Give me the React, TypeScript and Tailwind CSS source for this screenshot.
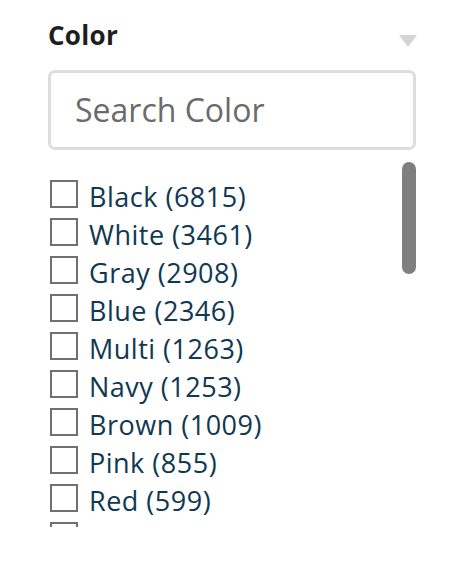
const colors = [
  ["Black", 6815],
  ["White", 3461],
  ["Gray", 2908],
  ["Blue", 2346],
  ["Multi", 1263],
  ["Navy", 1253],
  ["Brown", 1009],
  ["Pink", 855],
  ["Red", 599],
  ["Green", 512],
  ["Beige", 410],
]

const App = () => {
  return (
    <div className="w-[466px] h-[568px] bg-white font-['Open_Sans',sans-serif]">
      <div className="pl-[48px] w-[417px] pt-[18px]">
        <div className="flex items-center justify-between h-[34px]">
          <h3 className="text-[26px] font-bold text-[#1e1e1e] leading-none tracking-[0.3px]">Color</h3>
          <svg width="18" height="12" viewBox="0 0 18 12" className="mt-[12px]">
            <polygon points="0,0 18,0 9,12" fill="#d4d4d4" />
          </svg>
        </div>
        <div className="mt-[18px] mr-[1px] h-[80px] border-[3px] border-[#dddddd] rounded-[7px] flex items-center pl-[24px]">
          <input
            className="w-full outline-none text-[32px] text-[#333] placeholder:text-[#6b6b6b] bg-transparent"
            placeholder="Search Color"
          />
        </div>
        <div className="relative mt-[10px] h-[367px] overflow-hidden">
          <ul className="pt-[15px] pl-[2px]">
            {colors.map(([name, count]) => (
              <li key={name} className="flex items-center h-[38px] gap-[11px]">
                <span className="w-[28px] h-[28px] border-[2px] border-[#707070] bg-white shrink-0" />
                <span className="pt-[4px] text-[27px] tracking-[0.5px] text-[#0f3852] leading-none">
                  {name} ({count})
                </span>
              </li>
            ))}
          </ul>
          <div className="absolute right-[1px] top-[2px] w-[14px] h-[112px] rounded-full bg-[#7f7f7f]" />
        </div>
      </div>
    </div>
  )
}

export default App
